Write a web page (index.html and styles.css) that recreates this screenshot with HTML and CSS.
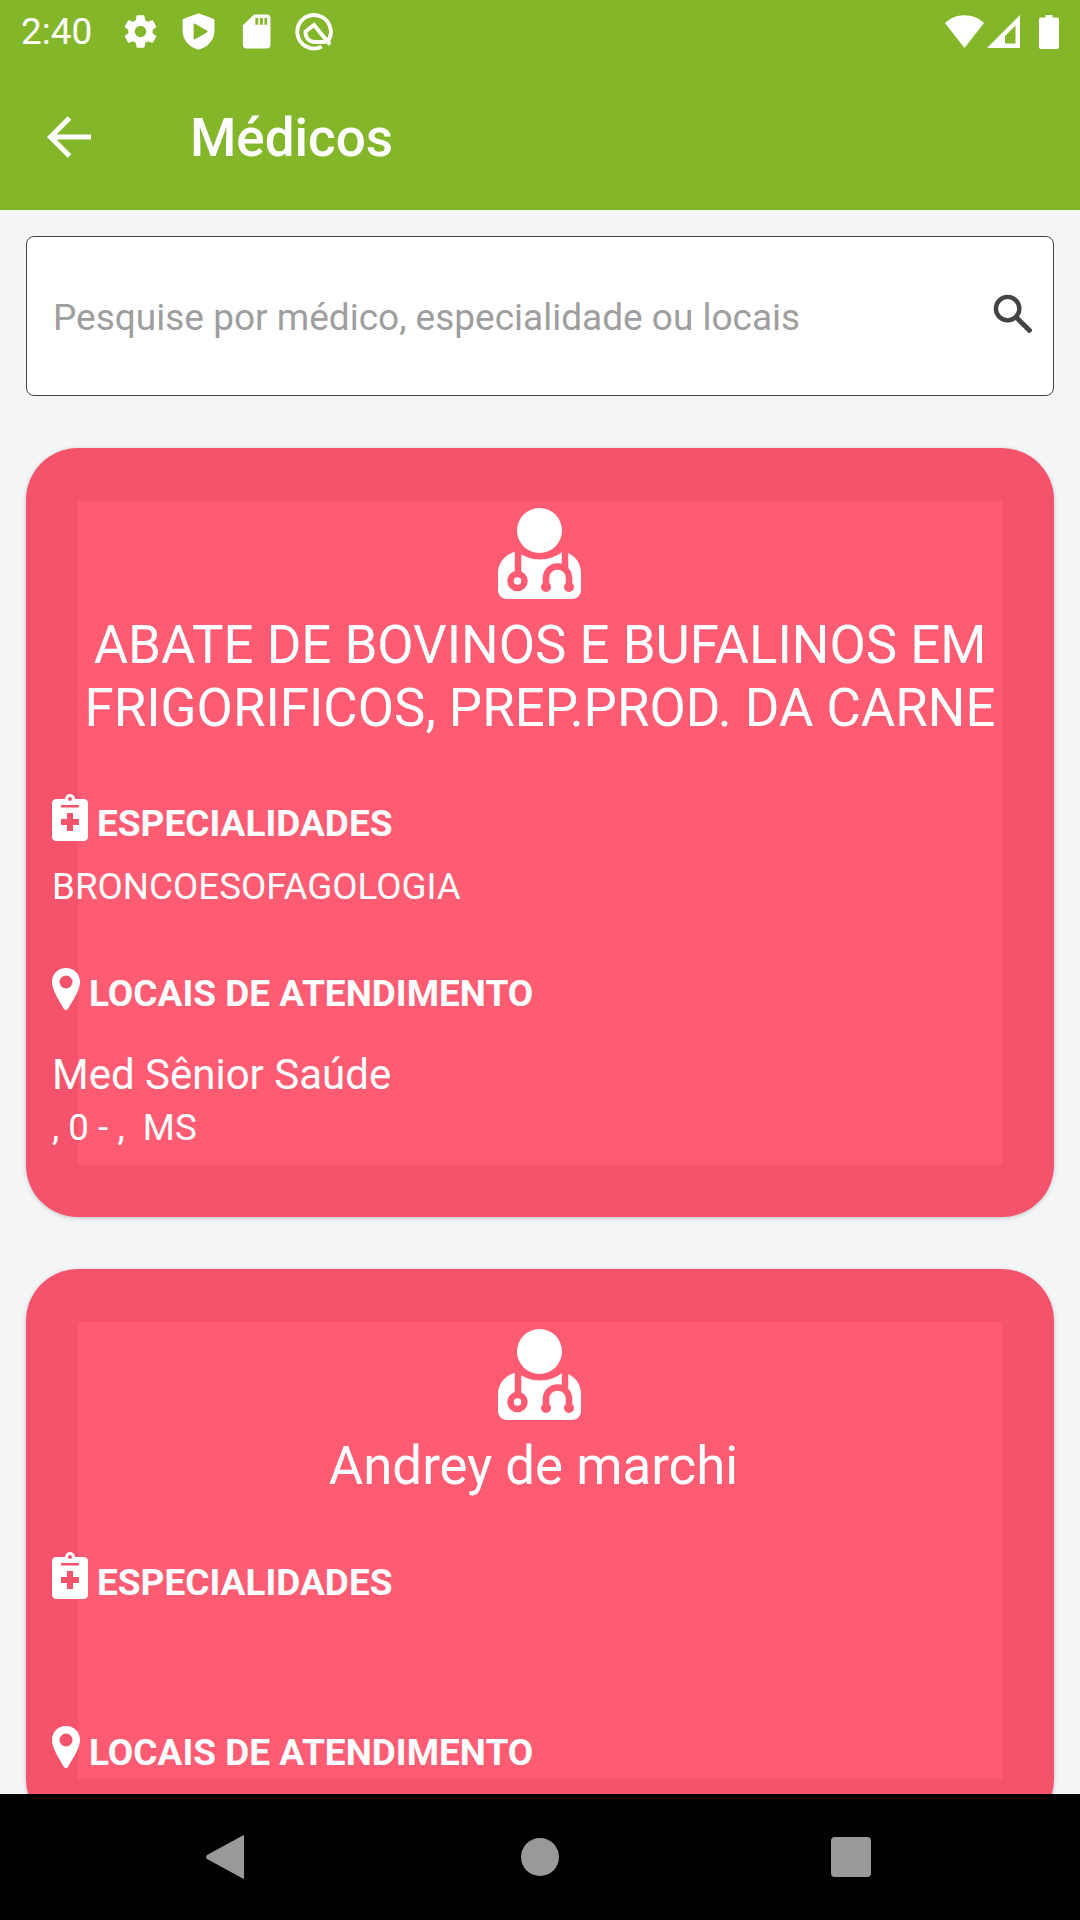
FILE: index.html
```html
<!DOCTYPE html>
<html lang="pt">
<head>
<meta charset="utf-8">
<title>Médicos</title>
<link rel="stylesheet" href="styles.css">
</head>
<body>
<div class="screen">
  <header class="appbar">
    <div class="status">
      <span class="time">2:40</span>
      <svg class="si" viewBox="0 0 24 24"><path fill="#fff" fill-rule="evenodd" d="M19.4 13c.05-.33.08-.66.08-1s-.03-.67-.08-1l2.1-1.65c.2-.15.25-.42.12-.64l-2-3.46c-.12-.22-.39-.3-.61-.22l-2.49 1c-.52-.4-1.08-.73-1.69-.98l-.38-2.65A.49.49 0 0 0 14 2h-4c-.25 0-.46.18-.49.42l-.38 2.65c-.61.25-1.17.59-1.69.98l-2.49-1a.5.5 0 0 0-.61.22l-2 3.46c-.13.22-.07.49.12.64L4.56 11c-.05.33-.08.67-.08 1s.03.67.08 1l-2.1 1.65c-.2.15-.25.42-.12.64l2 3.46c.12.22.39.3.61.22l2.49-1c.52.4 1.08.73 1.69.98l.38 2.65c.03.24.24.42.49.42h4c.25 0 .46-.18.49-.42l.38-2.65c.61-.25 1.17-.59 1.69-.98l2.49 1c.23.09.49 0 .61-.22l2-3.46c.12-.22.07-.49-.12-.64L19.4 13zM12 15.500a3.500 3.500 0 1 1 0-7 3.500 3.500 0 0 1 0 7z"/></svg>
      <svg class="si" viewBox="0 0 24 24"><path fill="#fff" fill-rule="evenodd" d="M12 .8 2.500 4.300c-.2.1-.3.2-.3.4v6.900c0 5.600 4.100 10.400 9.800 11.600 5.700-1.200 9.800-6 9.800-11.600V4.700c0-.2-.1-.3-.3-.4L12 .8zM9 7.500c0-.4.4-.6.7-.4l7.700 4.500c.3.2.3.6 0 .8l-7.700 4.500c-.3.2-.7 0-.7-.4V7.500z"/></svg>
      <svg class="si" viewBox="0 0 24 24"><path fill="#fff" fill-rule="evenodd" d="M18.500 1.500h-8L3.600 8.200V20.500c0 1.100.9 2 2 2h13c1.100 0 2-.9 2-2v-17c0-1.100-.9-2-2-2zM11.300 3.700h1.800v4.200h-1.800zM14.100 3.700h1.800v4.200h-1.800zM16.900 3.700h1.600v4.200h-1.600z"/></svg>
      <svg class="si" viewBox="0 0 24 24"><path fill="none" stroke="#fff" stroke-width="2.400" d="M16.500 21.300A10.300 10.300 0 1 1 20 18.300"/><path fill="none" stroke="#fff" stroke-width="2.400" d="M21.500 20 11.700 8 6.500 12c-.3 3.500 2 6.500 6 6.500h6.500"/></svg>
      <span class="status-gap"></span>
      <svg class="wifi" viewBox="0 0 39 33"><path fill="#fff" d="M0 8C5.500 3 12 .3 19.500.3S33.500 3 39 8L19.500 33z"/></svg>
      <svg class="signal" viewBox="0 0 33 33"><path fill="#fff" fill-rule="evenodd" d="M33 0v33H0zM28.500 10.500 18 21v7.500h10.500z"/></svg>
      <svg class="battery" viewBox="0 0 20 34"><path fill="#fff" d="M6.500 0h7v2.500h4.500c1.100 0 2 .9 2 2V32c0 1.100-.9 2-2 2H2c-1.100 0-2-.9-2-2V4.500c0-1.100.9-2 2-2h4.500z"/></svg>
    </div>
    <div class="toolbar">
      <svg class="back" viewBox="0 0 44 42"><path fill="none" stroke="#fff" stroke-width="5" d="M44 21H4M22.500 2 3.500 21l19 19"/></svg>
      <h1 class="page-title">Médicos</h1>
    </div>
  </header>

  <main class="content">
    <div class="search">
      <span class="placeholder">Pesquise por médico, especialidade ou locais</span>
      <svg class="search-icon" viewBox="0 0 40 40"><circle cx="15" cy="15" r="12" fill="none" stroke="#444" stroke-width="4.500"/><path fill="none" stroke="#444" stroke-width="5" d="m24 24 15 15"/></svg>
    </div>

    <section class="card">
      <div class="card-tint"></div>
      <div class="card-body">
        <svg class="doctor" viewBox="0 0 84 92"><use href="#doc"/></svg>
        <h2 class="name">ABATE DE BOVINOS E BUFALINOS EM FRIGORIFICOS, PREP.PROD. DA CARNE</h2>
        <div class="label label-spec"><svg class="clip" viewBox="0 0 36 48"><use href="#clip"/></svg>ESPECIALIDADES</div>
        <div class="spec-value">BRONCOESOFAGOLOGIA</div>
        <div class="label label-loc"><svg class="pin" viewBox="0 0 28 42"><use href="#pin"/></svg>LOCAIS DE ATENDIMENTO</div>
        <div class="place">Med Sênior Saúde</div>
        <div class="address">, 0 - ,&nbsp; MS</div>
      </div>
    </section>

    <section class="card card-short">
      <div class="card-tint"></div>
      <div class="card-body">
        <svg class="doctor" viewBox="0 0 84 92"><use href="#doc"/></svg>
        <h2 class="name">Andrey de marchi&nbsp;</h2>
        <div class="label label-spec"><svg class="clip" viewBox="0 0 36 48"><use href="#clip"/></svg>ESPECIALIDADES</div>
        <div class="spec-value"></div>
        <div class="label label-loc"><svg class="pin" viewBox="0 0 28 42"><use href="#pin"/></svg>LOCAIS DE ATENDIMENTO</div>
      </div>
    </section>
  </main>

  <nav class="navbar">
    <svg class="nav-back" viewBox="0 0 38 44"><path fill="#999" d="M38 1v42c0 .8-.7 1-1.200.5L1 24c-1.300-1-1.300-3 0-4L36.800.5c.5-.5 1.200-.3 1.200.5z"/></svg>
    <span class="nav-home"></span>
    <span class="nav-recent"></span>
  </nav>
</div>

<svg class="defs" aria-hidden="true">
  <defs>
    <g id="doc">
      <circle cx="41.500" cy="22.500" r="22.500" fill="#fff"/>
      <path fill="#fff" d="M19 43c6 5.500 14 8.500 23 8.500s17-3 23-8.500c11 3 18 11 18 22v17c0 5-4 9-9 9H9c-5 0-9-4-9-9V65c0-11 8-19 19-22z"/>
      <g fill="none" stroke="#ff5c74" stroke-width="6.500">
        <path d="M20 41v28"/>
        <circle cx="19.500" cy="73" r="7"/>
        <path d="M48 79V70c0-6.500 5-11.500 11.500-11.500S71 63.500 71 70v9"/>
        <path d="M67 42v18"/>
      </g>
      <circle cx="48" cy="79" r="5" fill="#ff5c74"/>
      <circle cx="71" cy="79" r="5" fill="#ff5c74"/>
    </g>
    <g id="clip">
      <path fill="#fff" fill-rule="evenodd" d="M13 6a5 5 0 0 1 10 0h9c2.200 0 4 1.800 4 4v34c0 2.200-1.800 4-4 4H4c-2.200 0-4-1.800-4-4V10c0-2.200 1.800-4 4-4zM16 6a2 2 0 1 0 4 0 2 2 0 0 0-4 0zM9 12v2.500h18V12zM15 20v6H9v6h6v6h6v-6h6v-6h-6v-6z"/>
    </g>
    <g id="pin">
      <path fill="#fff" fill-rule="evenodd" d="M14 0C6 0 0 6 0 14c0 9 10 23 12 27 1 1.500 3 1.500 4 0 2-4 12-18 12-27C28 6 22 0 14 0zm0 7.500a6.500 6.500 0 1 1 0 13 6.500 6.500 0 0 1 0-13z"/>
    </g>
  </defs>
</svg>
</body>
</html>
```

FILE: styles.css
```css
* { box-sizing: border-box; }
html, body { margin: 0; padding: 0; }
body { font-family: Roboto, "Noto Sans", sans-serif; color: #fff; background: #f3f5f7; }
.defs { width: 0; height: 0; overflow: hidden; display: block; }

.screen { width: 1080px; height: 1920px; display: flex; flex-direction: column; overflow: hidden; }

.appbar { height: 210px; background: #83b629; flex: none; }
.status { height: 63px; display: flex; align-items: center; padding: 0 21px; }
.time { font-size: 37px; width: 99.500px; line-height: 1; }
.si { width: 39px; height: 39px; margin-right: 19px; flex: none; }
.status-gap { flex: 1; }
.wifi { width: 39px; height: 33px; margin-right: 3px; }
.signal { width: 33px; height: 33px; margin-right: 19px; }
.battery { width: 20px; height: 34px; }

.toolbar { height: 147px; display: flex; align-items: center; padding: 0 0 0 47px; }
.back { width: 44px; height: 42px; margin-right: 99px; flex: none; }
.page-title { margin: 2px 0 0; font-size: 53px; font-weight: 500; }

.content { flex: 1; min-height: 0; overflow: hidden; padding: 26px 26px 0; background: #f3f5f7; }

.search { height: 160px; background: #fff; border: 1.500px solid #444; border-radius: 8px; display: flex; align-items: center; justify-content: space-between; padding: 0 21px 0 26px; margin-bottom: 52px; }
.placeholder { font-size: 37px; color: #9e9e9e; margin-top: 2px; }
.search-icon { width: 39px; height: 39px; margin-top: -5px; }

.card { position: relative; background: #f4536b; border-radius: 52px; margin-bottom: 52px; box-shadow: 0 1px 4px rgba(0,0,0,.2); padding: 60px 26px 67px; }
.card-short { padding-bottom: 54px; }
.card-tint { position: absolute; left: 52px; right: 52px; top: 53px; bottom: 52px; background: #ff5c74; }
.card-body { position: relative; display: flex; flex-direction: column; }
.doctor { width: 84px; height: 92px; align-self: center; }
.name { margin: 14px 0 0; font-size: 52.800px; font-weight: 400; line-height: 62.500px; text-align: center; }
.label { display: flex; align-items: center; font-size: 37px; font-weight: 700; line-height: 48px; height: 48px; }
.label-spec { margin-top: 61px; }
.label-loc { margin-top: 59px; }
.clip { width: 36px; height: 48px; margin-right: 9px; margin-bottom: 15px; flex: none; }
.pin { width: 28px; height: 42px; margin-right: 9px; margin-bottom: 11px; flex: none; }
.spec-value { font-size: 36.750px; line-height: 48px; margin-top: 15px; min-height: 48px; }
.place { font-size: 42px; line-height: 50px; margin-top: 32px; }
.address { font-size: 36.750px; line-height: 44px; margin-top: 6px; }

.navbar { height: 126px; background: #000; flex: none; position: relative; }
.nav-back { position: absolute; left: 206px; top: 41px; width: 38px; height: 44px; }
.nav-home { position: absolute; left: 521px; top: 44px; width: 38px; height: 38px; border-radius: 50%; background: #999; }
.nav-recent { position: absolute; left: 831px; top: 43px; width: 40px; height: 40px; border-radius: 4px; background: #999; }
```
